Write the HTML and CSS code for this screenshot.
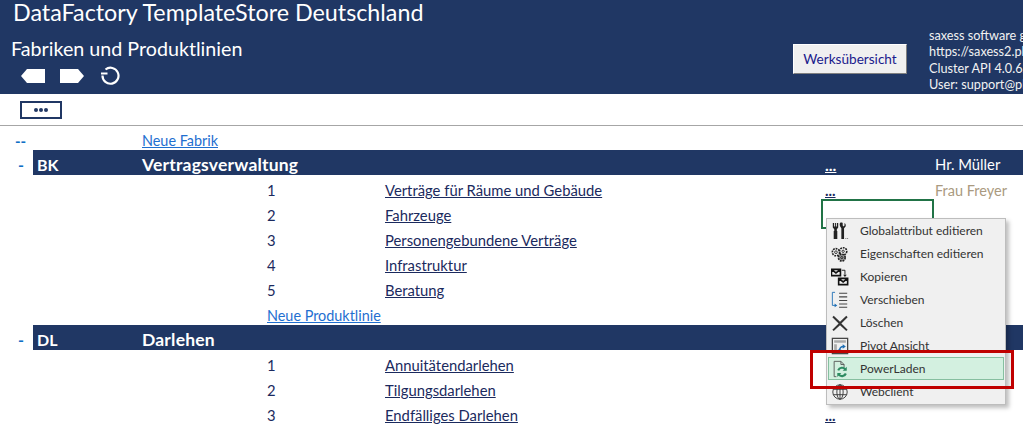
FILE: index.html
```html
<!DOCTYPE html>
<html lang="de">
<head>
<meta charset="utf-8">
<title>DataFactory TemplateStore Deutschland</title>
<link rel="stylesheet" href="styles.css">
</head>
<body>
<header class="head">
  <div class="head-left">
    <div class="title">DataFactory TemplateStore Deutschland</div>
    <div class="subtitle">Fabriken und Produktlinien</div>
    <div class="nav">
      <svg class="nav-ico" width="24" height="14" viewBox="0 0 24 14"><path d="M0 7 6 0H24V14H6Z" fill="#fff"/></svg>
      <svg class="nav-ico" width="24" height="14" viewBox="0 0 24 14"><path d="M0 0H18L24 7 18 14H0Z" fill="#fff"/></svg>
      <svg class="nav-ico reload" width="20" height="20" viewBox="0 0 20 20"><path d="M5.500 3.500A8 8 0 1 1 2.500 9.500" fill="none" stroke="#fff" stroke-width="2.200"/><path d="M1 6.500H7.500V8.500H1Z" fill="#fff"/></svg>
    </div>
  </div>
  <div class="head-right">
    <button class="werk">Werksübersicht</button>
    <div class="info">
      <div>saxess software gmbh</div>
      <div>https://saxess2.pbpartner.de</div>
      <div>Cluster API 4.0.62.1</div>
      <div>User: support@pbpartner.de</div>
    </div>
  </div>
</header>
<div class="toolbar"><div class="more"><i></i><i></i><i></i></div></div>
<main class="table">
  <div class="row first">
    <span class="dash dbl">--</span><a class="new c3" href="#">Neue Fabrik</a>
  </div>
  <div class="row band">
    <span class="dash">-</span><span class="code">BK</span><span class="name">Vertragsverwaltung</span><span class="dots-cell"><a href="#">...</a></span><span class="owner">Hr. Müller</span>
  </div>
  <div class="row"><span class="num">1</span><a class="link" href="#">Verträge für Räume und Gebäude</a><span class="dots-cell"><a href="#">...</a></span><span class="owner muted">Frau Freyer</span></div>
  <div class="row"><span class="num">2</span><a class="link" href="#">Fahrzeuge</a></div>
  <div class="row"><span class="num">3</span><a class="link" href="#">Personengebundene Verträge</a></div>
  <div class="row"><span class="num">4</span><a class="link" href="#">Infrastruktur</a></div>
  <div class="row"><span class="num">5</span><a class="link" href="#">Beratung</a></div>
  <div class="row"><a class="new num" href="#">Neue Produktlinie</a></div>
  <div class="row band">
    <span class="dash">-</span><span class="code">DL</span><span class="name">Darlehen</span>
  </div>
  <div class="row"><span class="num">1</span><a class="link" href="#">Annuitätendarlehen</a></div>
  <div class="row"><span class="num">2</span><a class="link" href="#">Tilgungsdarlehen</a></div>
  <div class="row"><span class="num">3</span><a class="link" href="#">Endfälliges Darlehen</a><span class="dots-cell"><a href="#">...</a></span></div>
</main>
<div class="cell-select"></div>
<ul class="menu">
  <li><svg width="18" height="18" viewBox="0 0 20 20"><path d="M2 1h1.500v4h1V1h1v4h1V1H8v5L6.500 8v2H7v9H3v-9h.6V8L2 6Z" fill="#222"/><path d="M10 1c1-.6 2-.6 3 0v3l1 1 1-1V1c1.600.6 1.600 3 1.200 4L14.500 7v12h-3V7L10.200 5C9.600 3.500 9.500 2 10 1Z" fill="#222"/><path d="M16 18h1v1h-1zM18 18h1v1h-1z" fill="#444"/></svg>Globalattribut editieren</li>
  <li><svg width="18" height="18" viewBox="0 0 20 20" fill="none" stroke="#222"><circle cx="5.500" cy="8" r="4" stroke-width="1.800" stroke-dasharray="2 1"/><circle cx="5.500" cy="8" r="1.500"/><circle cx="13.500" cy="7" r="4" stroke-width="1.800" stroke-dasharray="2 1"/><circle cx="13.500" cy="7" r="1.300"/><circle cx="12" cy="14" r="3.800" fill="#999" stroke-width="1.800" stroke-dasharray="2 1"/><circle cx="12" cy="14" r="1.200"/></svg>Eigenschaften editieren</li>
  <li><svg width="18" height="18" viewBox="0 0 20 20" fill="none" stroke="#111"><path d="M.500 1.500h10v7H.500zM.500 1.500l5 4 5-4M8.500 11.500h10v7h-10zM8.500 11.500l5 4 5-4" stroke-width="1.800"/><path d="M12 2.500h3.500v5"/><path d="M13.500 7.500l2 2.500 2-2.500z" fill="#222" stroke="none"/></svg>Kopieren</li>
  <li><svg width="18" height="18" viewBox="0 0 20 20" fill="none" stroke="#444"><path d="M4.500 1.500H1.500V16H5" stroke="#1f6fb5"/><path d="M7 16l-3-2v4z" fill="#1f6fb5" stroke="none"/><path d="M9 2.500h9M9 6.500h9M9 10.500h9M9 14.500h9M9 18h9" stroke-width="1.200"/></svg>Verschieben</li>
  <li><svg width="18" height="18" viewBox="0 0 20 20"><path d="M1.500 3.500 3 2 10 8.500 17 2 18.500 3.500 11.500 10.500 18.500 17.500 17 19 10 12.500 3 19 1.500 17.500 8.500 10.500Z" fill="#333"/></svg>Löschen</li>
  <li><svg width="18" height="18" viewBox="0 0 20 20" fill="none"><rect x="1.500" y="1.500" width="17" height="17" stroke="#444" stroke-width="1.400"/><path d="M3.500 3.500h13v3h-13zM3.500 8h3v8h-3z" fill="#aaa"/><path d="M9.500 15c0-3 2-4.500 4.500-4.500" stroke="#1f6fb5" stroke-width="1.500"/><path d="M13 8l3.500 2.500L13 13zM7.500 14l4 0-2 3z" fill="#1f6fb5"/></svg>Pivot Ansicht</li>
  <li class="active"><svg width="18" height="18" viewBox="0 0 20 20" fill="none"><path d="M3.500 18.500V1.500H11L14.500 5V8M11 1.500V5H14.500M3.500 18.500H6" stroke="#555"/><path d="M8 11.500a4.500 4.500 0 0 1 8-.8M16.500 15a4.500 4.500 0 0 1-8 .8" stroke="#2e8b62" stroke-width="2.400"/><path d="M17.500 7.500v4.500h-4.500zM7 19v-4.500h4.500z" fill="#2e8b62"/></svg>PowerLaden</li>
  <li><svg width="18" height="18" viewBox="0 0 20 20" fill="none" stroke="#333"><circle cx="10" cy="10" r="8"/><ellipse cx="10" cy="10" rx="3.500" ry="8"/><path d="M2.500 7h15M2.500 13h15M10 2v16"/></svg>Webclient</li>
</ul>
<div class="callout"></div>
</body>
</html>
```

FILE: styles.css
```css
* { box-sizing: border-box; }
html, body { margin: 0; padding: 0; }
body {
  width: 1023px;
  height: 425px;
  overflow: hidden;
  position: relative;
  background: #fff;
  font-family: "Lato", "Open Sans", sans-serif;
  color: #1b2a5e;
}
.head {
  height: 94px;
  background: #203764;
  color: #fff;
  display: flex;
  justify-content: space-between;
  overflow: hidden;
}
.head-left { padding: 0 0 0 13px; flex: none; }
.title { font-size: 23.300px; line-height: 25px; white-space: nowrap; }
.subtitle { font-size: 19.700px; line-height: 24px; margin: 12px 0 0 -2px; white-space: nowrap; }
.nav { display: flex; align-items: center; gap: 15px; margin: 5px 0 0 8px; height: 20px; }
.nav-ico { display: block; }
.reload { margin-left: 1px; }
.head-right { display: flex; align-items: flex-start; width: 230px; flex: none; overflow: hidden; }
.werk {
  margin-top: 44px;
  width: 114px;
  height: 30px;
  flex: none;
  background: #f0f0f0;
  border: 1px solid;
  border-color: #fff #7f7f7f #7f7f7f #fff;
  padding: 0;
  font: 13.600px "Lato", sans-serif;
  color: #1a1a8c;
}
.info {
  margin: 27px 0 0 22px;
  font-size: 12.700px;
  line-height: 16.300px;
  white-space: nowrap;
  color: #f2f2f2;
}
.toolbar { height: 32px; border-bottom: 1px solid #a6a6a6; padding: 7px 0 0 20px; }
.more {
  width: 42px;
  height: 18px;
  border: 2px solid #203764;
  display: flex;
  align-items: center;
  justify-content: center;
  gap: 1px;
}
.more i { width: 4px; height: 4px; border-radius: 50%; background: #203764; }
.table { padding-top: 3px; }
.row {
  display: grid;
  grid-template-columns: 33px 109px 125px 118px 440px 110px 88px;
  height: 25px;
  padding-top: 5px;
  align-items: center;
  font-size: 14.800px;
  white-space: nowrap;
}
.row.first { height: 21px; padding-top: 2px; }
.row > .num { grid-column: 4; }
.row > .link { grid-column: 5; justify-self: start; }
.row > .dots-cell { grid-column: 6; }
.row > .owner { grid-column: 7; }
.link { color: #1b2a5e; }
.new { color: #1f6fd0; font-size: 14.400px; justify-self: start; }
.row > .c3 { grid-column: 3; }
.row > .new.num { grid-column: 4 / 6; }
.dash { grid-column: 1; color: #0f6fc6; font-weight: 700; padding-left: 18px; }
.dash.dbl { padding-left: 15px; font-size: 15px; }
.band { color: #fff; background: linear-gradient(90deg, #fff 33px, #203764 33px); font-weight: 700; font-size: 16px; padding-top: 3px; align-items: center; }
.code { grid-column: 2; padding-left: 4px; }
.name { grid-column: 3 / 5; font-size: 17.500px; letter-spacing: .2px; }
.band .dots-cell a { color: #fff; }
.dots-cell a { color: #1b2a5e; font-weight: 700; }
.band .owner { font-weight: 400; font-size: 14.800px; }
.row > .muted { color: #aa9a80; font-size: 14.500px; }
.cell-select {
  position: absolute;
  left: 821px;
  top: 199px;
  width: 113px;
  height: 30px;
  border: 2px solid #217346;
}
.menu {
  position: absolute;
  left: 826px;
  top: 218px;
  width: 180px;
  height: 187px;
  margin: 0;
  padding: 0 1px;
  list-style: none;
  background: #f0f0f0;
  border: 1px solid #bdbdbd;
  box-shadow: 3px 3px 4px rgba(0, 0, 0, .25);
  font-size: 12px;
  color: #333;
}
.menu li {
  height: 23px;
  display: flex;
  align-items: center;
  gap: 11px;
  padding-left: 2px;
  border: 1px solid transparent;
}
.menu li.active { background: #d3f0e0; border-color: #86bfa0; }
.callout {
  position: absolute;
  left: 810px;
  top: 350px;
  width: 204px;
  height: 39px;
  border: 3px solid #c00000;
}
```
